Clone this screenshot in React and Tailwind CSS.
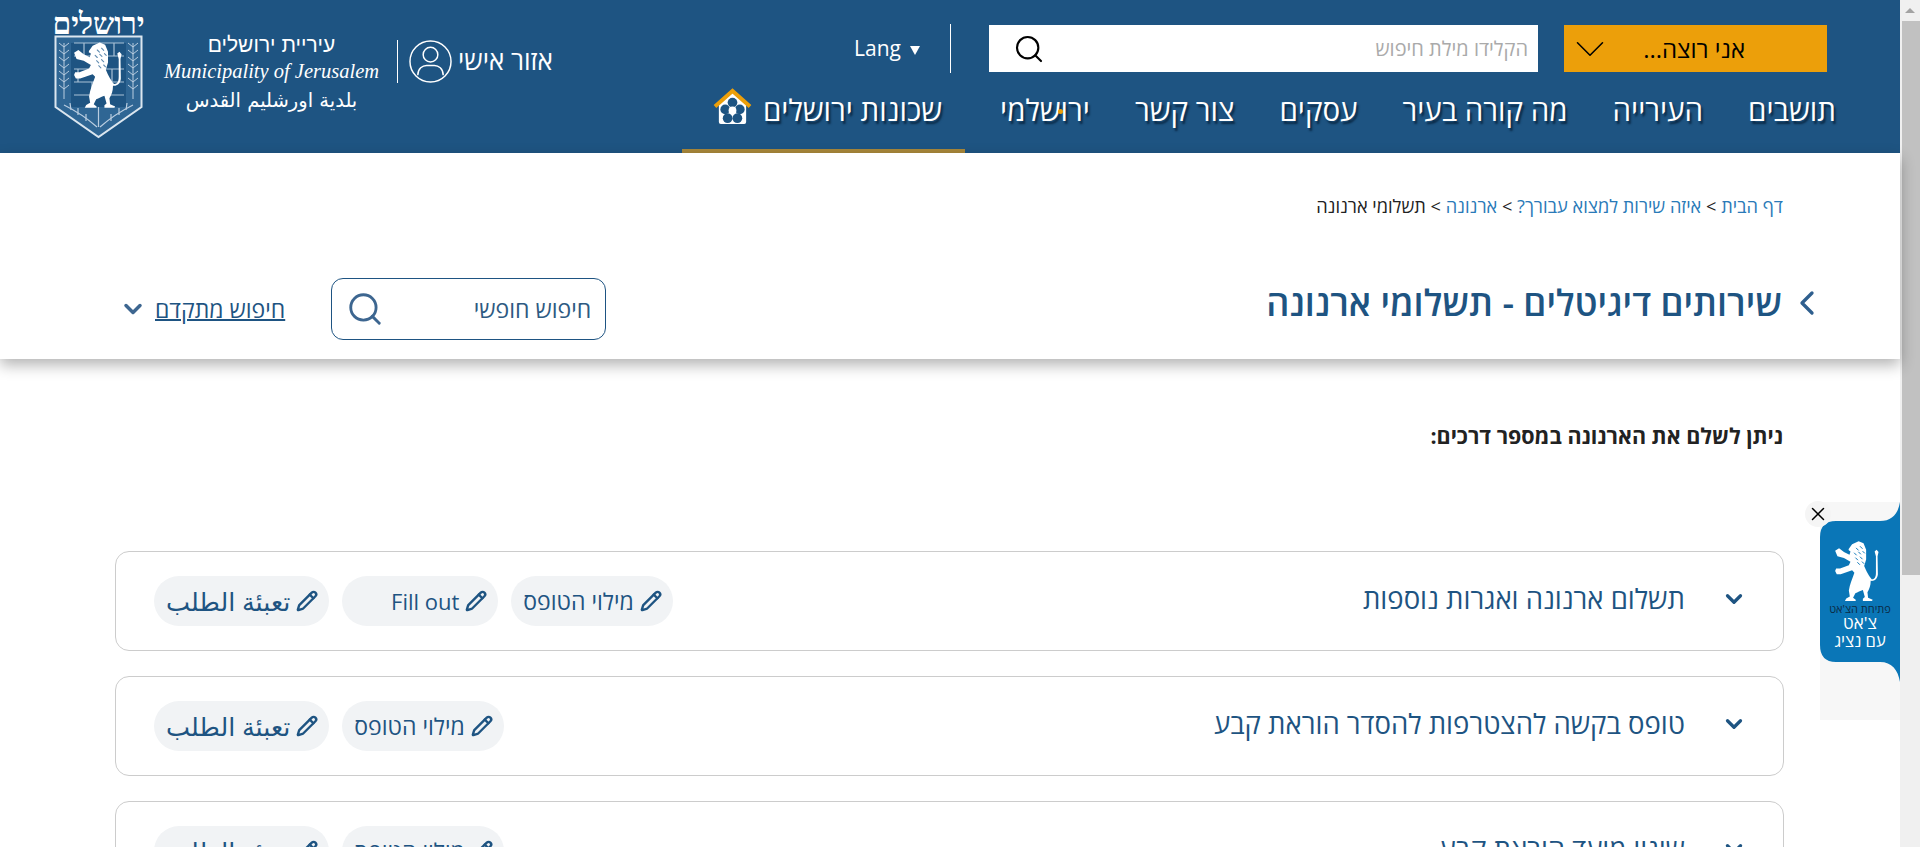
import React from "react"
import { Search, ChevronDown, ChevronLeft, Pencil, X } from "lucide-react"

const navItems = ["תושבים", "העירייה", "מה קורה בעיר", "עסקים", "צור קשר", "ירושלמי"]

const cards = [
  { title: "תשלום ארנונה ואגרות נוספות", pills: ["מילוי הטופס", "Fill out", "تعبئة الطلب"] },
  { title: "טופס בקשה להצטרפות להסדר הוראת קבע", pills: ["מילוי הטופס", "تعبئة الطلب"] },
  { title: "שינוי מועד הוראת קבע", pills: ["מילוי הטופס", "تعبئة الطلب"] }
]

const LION =
  "M205 172L215 158L235 149L250 155L258 175L258 205L252 225C258 240 268 258 275 265C284 266 288 258 288 245L288 195L284 180L290 175L296 182L293 195L294 250C293 265 282 272 272 270C272 285 268 295 262 305L264 322L278 328L276 332L248 332L248 325L254 320L248 298C240 300 232 305 225 308L218 322L226 328L226 332L193 332L197 324L208 318L205 300C208 280 215 265 222 245L215 238L180 250L168 250L163 240L166 232L178 232L205 222L210 212L190 200L170 195L163 178L175 170L190 182L207 190L210 180L204 176Z"

const MANE = "M228 170l6 6M240 165l6 6M222 185l6 6M235 182l6 6M248 180l5 5M226 200l6 6M240 197l6 6M232 214l6 6M246 212l5 5"

const Lion = ({ mane, ...props }) => (
  <svg viewBox="160 145 140 190" {...props}>
    <path d={LION} fill="#fff" />
    <path d={MANE} stroke={mane} strokeWidth="3" strokeLinecap="round" />
  </svg>
)

const Wheat = ({ x }) => (
  <g stroke="#b9cde0" strokeWidth="1" fill="none">
    <path d={`M${x} 8V64`} />
    {[12, 19, 26, 33, 40, 47, 54].map(y => (
      <path key={y} d={`M${x - 5} ${y - 4}L${x} ${y}L${x + 5} ${y - 4}`} />
    ))}
  </g>
)

const Shield = () => (
  <svg viewBox="0 0 89 104" className="w-[89px] h-[104px] block">
    <path d="M1.5 1.5H87.5V72L44.5 102L1.5 72Z" fill="#2f6694" stroke="#dbe6ef" strokeWidth="2" />
    <path d="M17 8H72V72H17Z" fill="#1e5482" />
    <g stroke="#a9c1d6" strokeWidth="1.2" fill="none">
      <path d="M20 8H70M20 21H70M20 34H70M20 47H70M20 60H70M30 8V21M45 8V21M60 8V21M24 34V47M38 47V60M58 34V47" />
    </g>
    <Wheat x={10} />
    <Wheat x={79} />
    <g stroke="#b9cde0" strokeWidth="1.2" fill="none">
      <path d="M10 70C22 76 34 84 43 92M79 70C67 76 55 84 46 92M44.5 72V92" />
      <path d="M16 68l1 7M24 73l0 7M32 79l0 7M73 68l-1 7M65 73l0 7M57 79l0 7" />
    </g>
    <Lion mane="#5f8bb0" x="19" y="6" width="50" height="68" />
  </svg>
)

const HouseIcon = () => (
  <svg viewBox="0 0 40 38" className="w-[39px] h-[37px] -mt-[8px]">
    <path d="M6 16L20 4L34 16V35Q34 37 32 37H8Q6 37 6 35Z" fill="#fff" />
    <path d="M2 19L20 3L38 19" fill="none" stroke="#ec9f0a" strokeWidth="4" />
    <g fill="#1e5482">
      <circle cx="20" cy="15" r="5" />
      <circle cx="12.5" cy="22" r="5" />
      <circle cx="27.5" cy="22" r="5" />
      <circle cx="15" cy="31" r="5" />
      <circle cx="25" cy="31" r="5" />
    </g>
    <circle cx="20" cy="23" r="4" fill="#fff" />
  </svg>
)

const Pill = ({ label }) => (
  <a
    href="#"
    className={`flex items-center gap-[6px] h-[50px] rounded-full bg-[#f1f3f5] pr-[11px] pl-[12px] text-[#1e5482] whitespace-nowrap ${
      label === "Fill out" ? "w-[156px] text-[22px]" : label === "تعبئة الطلب" ? "text-[25.5px]" : "text-[23px]"
    }`}
  >
    <Pencil className="w-[22px] h-[22px] shrink-0" strokeWidth={2.6} />
    <span>{label}</span>
  </a>
)

const App = () => {
  return (
    <div
      dir="rtl"
      className="flex h-[847px] overflow-hidden bg-white text-[#1e5482]"
      style={{ fontFamily: '"Open Sans", "Liberation Sans", "DejaVu Sans", sans-serif' }}
    >
      <div className="w-[20px] shrink-0 bg-[#f0f0f0] flex flex-col items-start">
        <div className="w-full h-[21px] flex items-center justify-center">
          <div className="w-0 h-0 border-x-[5px] border-x-transparent border-b-[5px] border-b-[#a3a3a3]" />
        </div>
        <div className="w-[18px] h-[554px] bg-[#c1c1c1]" />
      </div>

      <div className="relative flex-1 min-w-0">
        <header className="h-[153px] bg-[#1e5482] flex justify-between pr-[64px] pl-[54px] text-white">
          <div className="flex flex-col">
            <div className="flex items-center mt-[25px] mr-[9px] h-[47px]">
              <button className="w-[263px] h-[47px] bg-[#ec9f0a] text-black text-[24px] flex items-center justify-between pr-[82px] pl-[1px]">
                <span>אני רוצה...</span>
                <ChevronDown className="w-[50px] h-[50px]" strokeWidth={0.75} />
              </button>
              <div className="w-[549px] h-[47px] bg-white mr-[26px] flex items-center pr-[10px] pl-[24px]">
                <input
                  placeholder="הקלידו מילת חיפוש"
                  className="flex-1 outline-none text-[20px] text-black placeholder:text-[#aaaaaa]"
                />
                <Search className="w-[32px] h-[32px] text-black" strokeWidth={1.6} />
              </div>
              <div className="w-px h-[49px] bg-white mr-[38px]" />
              <div dir="ltr" className="flex items-center gap-[9px] mr-[30px] text-[21px]">
                <span>Lang</span>
                <span className="w-0 h-0 border-x-[5px] border-x-transparent border-t-[9px] border-t-white mt-[3px]" />
              </div>
            </div>
            <nav className="flex-1 flex items-stretch justify-start gap-[45px] text-[29.5px] [text-shadow:2px_3px_2px_#0a2a47]">
              {navItems.map(item => (
                <a key={item} href="#" className="relative flex items-center pb-[4px] whitespace-nowrap">
                  {item}
                  {item === "ירושלמי" && (
                    <span className="absolute top-[37px] right-[27px] w-[5px] h-[5px] rounded-full bg-[#ec9f0a]" />
                  )}
                </a>
              ))}
              <a
                href="#"
                className="flex items-center gap-[11px] -mr-[10px] pr-[23px] pl-[31px] border-b-[4px] border-b-[#a8873a] whitespace-nowrap"
              >
                <span>שכונות ירושלים</span>
                <HouseIcon />
              </a>
            </nav>
          </div>

          <div className="flex items-start">
            <a href="#" className="mt-[44px] text-[26px] leading-[32px] font-medium whitespace-nowrap ml-[6px]">
              אזור אישי
            </a>
            <svg viewBox="0 0 44 44" className="w-[43px] h-[43px] mt-[40px] ml-[11px]" fill="none" stroke="#fff" strokeWidth="1.5">
              <circle cx="22" cy="22" r="21" />
              <circle cx="22" cy="15" r="7.5" />
              <path d="M9 36C9 29 14 26 18 26H26C30 26 35 29 35 36" />
            </svg>
            <div className="w-px h-[43px] bg-white mt-[40px] ml-[19px]" />
            <div className="w-[213px] mt-[34px] ml-[22px] flex flex-col items-center leading-none">
              <span className="text-[21px] h-[27px] whitespace-nowrap" style={{ fontFamily: '"Liberation Sans", sans-serif' }}>
                עיריית ירושלים
              </span>
              <span dir="ltr" className="text-[20.5px] italic h-[30px] whitespace-nowrap" style={{ fontFamily: '"Liberation Serif", serif' }}>
                Municipality of Jerusalem
              </span>
              <span className="text-[19.5px] whitespace-nowrap" style={{ fontFamily: '"DejaVu Sans", sans-serif' }}>
                بلدية اورشليم القدس
              </span>
            </div>
            <div className="w-[89px] mt-[9px] flex flex-col items-center">
              <span className="text-[30px] font-bold leading-[30px] h-[26px] whitespace-nowrap" style={{ fontFamily: '"Liberation Serif", serif' }}>
                ירושלים
              </span>
              <Shield />
            </div>
          </div>
        </header>

        <section className="relative h-[206px] bg-white shadow-[0_6px_14px_rgba(0,0,0,0.3)]">
          <div className="pt-[41px] pr-[117px] text-[18.2px] leading-6 text-[#222]">
            <a href="#" className="text-[#2a7ab8]">דף הבית</a>
            <span> &gt; </span>
            <a href="#" className="text-[#2a7ab8]">איזה שירות למצוא עבורך?</a>
            <span> &gt; </span>
            <a href="#" className="text-[#2a7ab8]">ארנונה</a>
            <span> &gt; </span>
            <span>תשלומי ארנונה</span>
          </div>
          <div className="flex items-center justify-between mt-[60px] pr-[85px] pl-[119px] h-[62px]">
            <div className="flex items-center gap-[17px] mb-[12px]">
              <ChevronLeft className="w-[40px] h-[40px] text-[#2f5f8e] -mx-[12px]" strokeWidth={2} />
              <h1 className="text-[36px] font-semibold leading-none">שירותים דיגיטלים - תשלומי ארנונה</h1>
            </div>
            <div className="flex items-center">
              <div className="w-[275px] h-[62px] border border-[#1e5482] rounded-[12px] flex items-center pr-[14px] pl-[14px]">
                <input
                  placeholder="חיפוש חופשי"
                  className="flex-1 min-w-0 outline-none text-[23px] placeholder:text-[#2e5a82]"
                />
                <Search className="w-[38px] h-[38px] text-[#3d6690]" strokeWidth={1.8} />
              </div>
              <a href="#" className="mr-[46px] text-[23px] underline decoration-2 whitespace-nowrap">חיפוש מתקדם</a>
              <ChevronDown className="w-[28px] h-[28px] text-[#3d6690] mr-[8px]" strokeWidth={3} />
            </div>
          </div>
        </section>

        <main>
          <p className="pt-[65px] pr-[117px] text-[21.5px] leading-6 font-bold text-[#222]">ניתן לשלם את הארנונה במספר דרכים:</p>
          <div className="mt-[103px] mr-[116px] ml-[115px] flex flex-col gap-[25px]">
            {cards.map(card => (
              <div
                key={card.title}
                className="h-[100px] shrink-0 border border-[#cccccc] rounded-[14px] flex items-center justify-between pr-[38px] pl-[38px]"
              >
                <div className="flex items-center gap-[38px] pb-[4px]">
                  <ChevronDown className="w-[26px] h-[26px] -mx-[2px]" strokeWidth={3} />
                  <h2 className="text-[27.5px] leading-none whitespace-nowrap">{card.title}</h2>
                </div>
                <div className="flex items-center gap-[13px]">
                  {card.pills.map(pill => (
                    <Pill key={pill} label={pill} />
                  ))}
                </div>
              </div>
            ))}
          </div>
        </main>

        <aside className="absolute top-[502px] right-0 w-[80px] h-[218px] bg-[#f7f7f7]">
          <svg viewBox="0 0 80 180" className="absolute inset-x-0 top-0 w-[80px] h-[180px]">
            <path d="M80 0C78 12 72 19 60 19H16Q0 19 0 35V143Q0 160 16 160H60C72 160 78 168 80 180Z" fill="#0a76b7" />
          </svg>
          <button className="absolute -top-[1px] left-[-15px] w-[26px] h-[26px] rounded-full bg-[#f5f5f5] flex items-center justify-center text-black">
            <X className="w-[22px] h-[22px]" strokeWidth={1.6} />
          </button>
          <div className="relative flex flex-col items-center pt-[38px] text-white">
            <Lion mane="#0a76b7" className="w-[46px] h-[62px] mr-[6px] shrink-0" />
            <span className="text-[11px] leading-[12px] text-[#0b2a44] mt-[1px] whitespace-nowrap">פתיחת הצ'אט</span>
            <span className="text-[17px] leading-[14px] mt-[1px]">צ'אט</span>
            <span className="text-[16.5px] leading-[14px] mt-[4px]">עם נציג</span>
          </div>
        </aside>
      </div>
    </div>
  )
}

export default App
